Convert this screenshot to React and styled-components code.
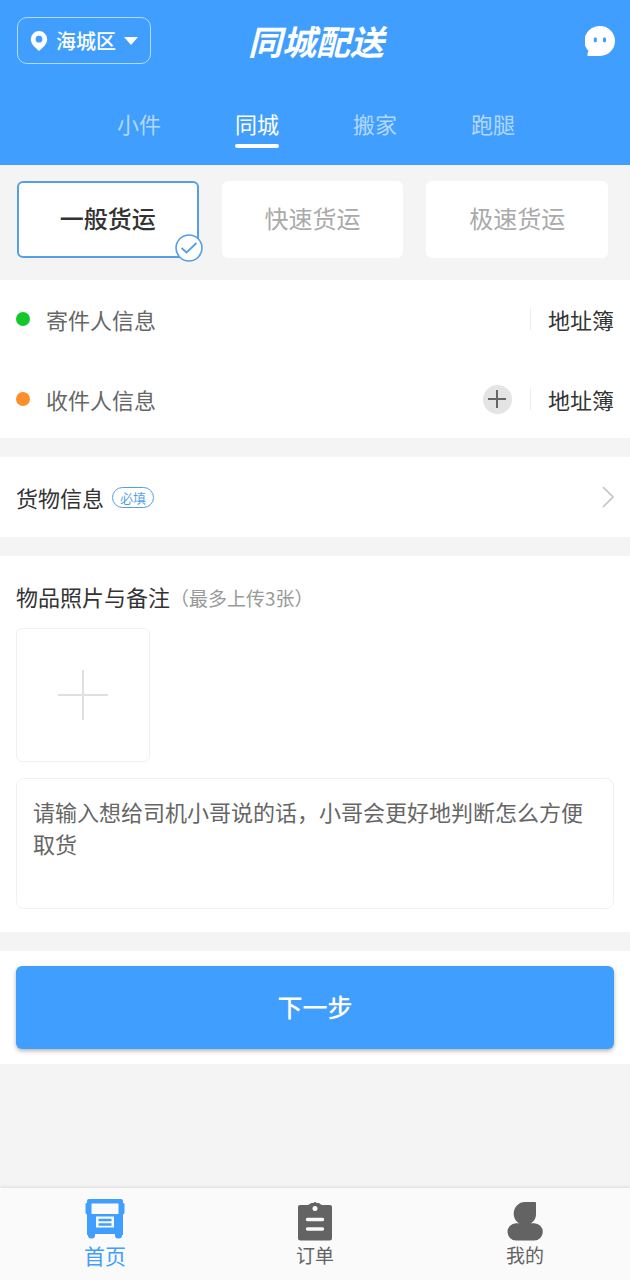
import React, { useState } from 'react';
import styled, { createGlobalStyle } from 'styled-components';

const TABS = ['小件', '同城', '搬家', '跑腿'];
const SERVICES = ['一般货运', '快速货运', '极速货运'];

const PinIcon = () => (
  <svg width="18" height="20" viewBox="0 0 18 20" aria-hidden="true">
    <path
      fill="#fff"
      fillRule="evenodd"
      d="M9 0a8.200 8.200 0 0 1 8.200 8.200c0 3.200-1.800 5.600-3.900 7.900L9 20l-4.300-3.900C2.600 13.800.8 11.400.8 8.200A8.200 8.200 0 0 1 9 0zm0 4.800a3.400 3.400 0 1 0 0 6.800 3.400 3.400 0 0 0 0-6.800z"
    />
  </svg>
);

const ChatIcon = () => (
  <svg width="30" height="30" viewBox="0 0 30 30" aria-hidden="true">
    <path fill="#fff" d="M15 0a15 15 0 0 1 0 30H2.500v-2.500c0-.8.900-1.400 1-2.200A15 15 0 0 1 15 0z" />
    <rect x="8.800" y="11.500" width="3" height="4.800" rx="1" fill="#409eff" />
    <rect x="18" y="11.500" width="3" height="4.800" rx="1" fill="#409eff" />
  </svg>
);

const CheckIcon = () => (
  <svg width="28" height="28" viewBox="0 0 28 28" aria-hidden="true">
    <circle cx="14" cy="14" r="13" fill="#fff" stroke="#559fe6" strokeWidth="1.600" />
    <path d="M6.500 14l5 4.500L21.500 9" fill="none" stroke="#559fe6" strokeWidth="1.800" />
  </svg>
);

const PlusIcon = ({ size, color, weight }) => (
  <svg width={size} height={size} viewBox={`0 0 ${size} ${size}`} aria-hidden="true">
    <path d={`M${size / 2} 0V${size}M0 ${size / 2}H${size}`} stroke={color} strokeWidth={weight} />
  </svg>
);

const ArrowIcon = () => (
  <svg width="12" height="22" viewBox="0 0 12 22" aria-hidden="true">
    <path d="M1 1l10 10L1 21" fill="none" stroke="#c4c4c4" strokeWidth="1.600" />
  </svg>
);

const TruckIcon = () => (
  <svg width="40" height="44" viewBox="0 0 40 44" aria-hidden="true">
    <path
      fill="#409eff"
      fillRule="evenodd"
      d="M4 1h32a2 2 0 0 1 2 2v2h.5a1 1 0 0 1 1 1v8.500a2 2 0 0 1-1.500 2V37h-1v1a3 3 0 0 1-3 2.500h-1a3 3 0 0 1-3-2.500v-2H10v2a3 3 0 0 1-3 2.500H6A3 3 0 0 1 3 38v-1H2V16.500a2 2 0 0 1-1.500-2V6a1 1 0 0 1 1-1H2V3a2 2 0 0 1 2-2zm2.500 4.500v10.500h27V5.500zm4.500 13v11h18v-11z"
    />
    <path d="M13.500 22h13M13.500 26.500h13" stroke="#409eff" strokeWidth="2.400" />
  </svg>
);

const OrderIcon = () => (
  <svg width="36" height="44" viewBox="0 0 36 44" aria-hidden="true">
    <path
      fill="#636363"
      d="M3 7h7.500c2 0 2.500-2 4.500-2h1.500a1.700 1.700 0 0 1 3 0H21c2 0 2.500 2 4.500 2H33a2 2 0 0 1 2 2v31a2.500 2.500 0 0 1-2.500 2.500h-29A2.500 2.500 0 0 1 1 40V9a2 2 0 0 1 2-2z"
    />
    <circle cx="18" cy="10.500" r="2.500" fill="#fafafa" />
    <path d="M10.500 21.500h15M10.500 31h15" stroke="#fafafa" strokeWidth="3.400" strokeLinecap="round" />
  </svg>
);

const UserIcon = () => (
  <svg width="36" height="44" viewBox="0 0 36 44" aria-hidden="true">
    <path fill="#636363" d="M18 4h10a1 1 0 0 1 1 1v11c0 4.500-2.200 7.800-5.500 9.300h3.700a8.600 8.600 0 0 1 0 17.200H9.100a8.600 8.600 0 0 1 0-17.200h3.400C9 23.800 6.700 20 6.700 15.500A11.400 11.400 0 0 1 18 4z" />
  </svg>
);

const NAV = [
  { label: '首页', href: '#home', Icon: TruckIcon },
  { label: '订单', href: '#orders', Icon: OrderIcon },
  { label: '我的', href: '#mine', Icon: UserIcon },
];

const App = () => {
  const [tab, setTab] = useState('同城');
  const [service, setService] = useState('一般货运');
  const [remark, setRemark] = useState('');

  return (
    <Page>
      <GlobalStyle />
      <Header>
        <TopBar>
          <CityButton type="button">
            <PinIcon />
            海城区
            <Caret />
          </CityButton>
          <Logo>同城配送</Logo>
          <ChatButton type="button" aria-label="客服">
            <ChatIcon />
          </ChatButton>
        </TopBar>
        <Tabs>
          {TABS.map((name) => (
            <Tab key={name} type="button" $active={name === tab} onClick={() => setTab(name)}>
              {name}
            </Tab>
          ))}
        </Tabs>
      </Header>

      <Services>
        {SERVICES.map((name) => (
          <Service key={name} $active={name === service}>
            <ServiceRadio name="service" checked={name === service} onChange={() => setService(name)} />
            {name}
            {name === service && (
              <CheckBadge>
                <CheckIcon />
              </CheckBadge>
            )}
          </Service>
        ))}
      </Services>

      <Sections>
        <AddressPanel>
          <AddressRow>
            <Dot $color="#14c72c" />
            <AddressButton type="button">寄件人信息</AddressButton>
            <BookLink href="#book">地址簿</BookLink>
          </AddressRow>
          <AddressRow>
            <Dot $color="#fb8f29" />
            <AddressButton type="button">收件人信息</AddressButton>
            <AddButton type="button" aria-label="添加收件人">
              <PlusIcon size={18} color="#666" weight={2} />
            </AddButton>
            <BookLink href="#book">地址簿</BookLink>
          </AddressRow>
        </AddressPanel>

        <GoodsButton type="button">
          货物信息
          <Required>必填</Required>
          <ArrowIcon />
        </GoodsButton>

        <PhotoPanel>
          <PanelTitle>
            物品照片与备注<Hint>（最多上传3张）</Hint>
          </PanelTitle>
          <UploadButton type="button" aria-label="上传照片">
            <PlusIcon size={50} color="#e0e0e0" weight={2} />
          </UploadButton>
          <Remark
            aria-label="备注"
            placeholder="请输入想给司机小哥说的话，小哥会更好地判断怎么方便取货"
            value={remark}
            onChange={(e) => setRemark(e.target.value)}
          />
        </PhotoPanel>

        <SubmitPanel>
          <SubmitButton type="button">下一步</SubmitButton>
        </SubmitPanel>
      </Sections>

      <BottomNav>
        {NAV.map(({ label, href, Icon }, i) => (
          <NavLink key={label} href={href} $active={i === 0}>
            <Icon />
            {label}
          </NavLink>
        ))}
      </BottomNav>
    </Page>
  );
};

export default App;

const GlobalStyle = createGlobalStyle`
  * {
    box-sizing: border-box;
  }

  body {
    margin: 0;
    background: #f4f4f4;
    font-family: 'Noto Sans CJK SC', Roboto, sans-serif;
    font-size: 22px;
    line-height: 32px;
    color: #333;
  }

  button, input, textarea {
    margin: 0;
    padding: 0;
    border: none;
    background: none;
    font: inherit;
    color: inherit;
  }

  button {
    cursor: pointer;
  }

  svg {
    display: block;
    flex-shrink: 0;
  }
`;

const Page = styled.div`
  display: flex;
  flex-direction: column;
  min-height: 100vh;
`;

const Header = styled.header`
  padding: 17px 15px 17px 17px;
  background: #409eff;
  color: #fff;
`;

const TopBar = styled.div`
  display: grid;
  grid-template-columns: 1fr auto 1fr;
  align-items: center;
`;

const CityButton = styled.button`
  display: flex;
  align-items: center;
  justify-self: start;
  gap: 8px;
  height: 47px;
  padding: 0 12px;
  border: 1px solid #b5d9ff;
  border-radius: 10px;
  font-size: 20px;
  font-weight: 500;
`;

const Caret = styled.span`
  border: 7px solid transparent;
  border-top: 8px solid #fff;
  border-bottom: none;
`;

const Logo = styled.h1`
  margin: 0;
  font-size: 34px;
  font-style: italic;
  font-weight: 700;
  line-height: 47px;
`;

const ChatButton = styled.button`
  justify-self: end;
`;

const Tabs = styled.nav`
  display: flex;
  justify-content: center;
  gap: 74px;
  margin-top: 43px;
`;

const Tab = styled.button`
  color: ${({ $active }) => ($active ? '#fff' : '#b3d8ff')};

  &::after {
    content: '';
    display: block;
    height: 4px;
    margin-top: 5px;
    border-radius: 2px;
    background: ${({ $active }) => ($active ? '#fff' : 'transparent')};
  }
`;

const Services = styled.div`
  display: grid;
  grid-template-columns: repeat(3, 1fr);
  gap: 23px;
  padding: 16px 22px 22px 17px;
`;

const Service = styled.label`
  position: relative;
  display: flex;
  align-items: center;
  justify-content: center;
  height: 77px;
  padding-bottom: 4px;
  border: 2px solid ${({ $active }) => ($active ? '#559fe6' : '#fff')};
  border-radius: 6px;
  background: #fff;
  color: ${({ $active }) => ($active ? '#333' : '#aaa')};
  font-size: 24px;
  font-weight: ${({ $active }) => ($active ? 500 : 400)};
  cursor: pointer;
`;

const ServiceRadio = styled.input.attrs({ type: 'radio' })`
  position: absolute;
  opacity: 0;
`;

const CheckBadge = styled.span`
  position: absolute;
  right: -6px;
  bottom: -6px;
`;

const Sections = styled.main`
  display: flex;
  flex-direction: column;
  gap: 19px;
`;

const AddressPanel = styled.section`
  display: grid;
  gap: 2px;
  background: #fff;
`;

const AddressRow = styled.div`
  display: flex;
  align-items: center;
  height: 78px;
  padding: 0 16px;
`;

const Dot = styled.span`
  width: 14px;
  height: 14px;
  margin-right: 16px;
  border-radius: 50%;
  background: ${({ $color }) => $color};
`;

const AddressButton = styled.button`
  flex: 1;
  color: #666;
  text-align: left;
`;

const AddButton = styled.button`
  display: grid;
  place-items: center;
  width: 29px;
  height: 29px;
  margin-right: 18px;
  border-radius: 50%;
  background: #e4e4e4;
`;

const BookLink = styled.a`
  padding-left: 17px;
  border-left: 1px solid #eee;
  color: inherit;
  line-height: 22px;
  text-decoration: none;
`;

const GoodsButton = styled.button`
  display: flex;
  align-items: center;
  height: 80px;
  padding: 0 16px;
  background: #fff;

  svg {
    margin-left: auto;
  }
`;

const Required = styled.span`
  margin-left: 8px;
  padding: 0 7px;
  border: 1px solid #559fe6;
  border-radius: 11px;
  color: #559fe6;
  font-size: 13px;
  line-height: 19px;
`;

const PhotoPanel = styled.section`
  padding: 24px 16px 23px;
  background: #fff;
`;

const PanelTitle = styled.h2`
  margin: 0 0 16px;
  font-size: 22px;
  font-weight: 400;
`;

const Hint = styled.span`
  color: #999;
  font-size: 19px;
  line-height: 22px;
`;

const UploadButton = styled.button`
  display: grid;
  place-items: center;
  width: 134px;
  height: 134px;
  margin-bottom: 16px;
  border: 1px solid #f1f1f1;
  border-radius: 6px;
`;

const Remark = styled.textarea`
  display: block;
  width: 100%;
  height: 131px;
  padding: 16px;
  border: 1px solid #f1f1f1;
  border-radius: 8px;
  resize: none;

  &::placeholder {
    color: #666;
  }
`;

const SubmitPanel = styled.div`
  padding: 15px 16px;
  background: #fff;
`;

const SubmitButton = styled.button`
  display: block;
  width: 100%;
  height: 83px;
  padding-bottom: 4px;
  border-radius: 6px;
  background: #409eff;
  box-shadow: 0 2px 4px rgba(0, 0, 0, 0.3);
  color: #fff;
  font-size: 25px;
  font-weight: 500;
`;

const BottomNav = styled.nav`
  display: grid;
  grid-template-columns: repeat(3, 1fr);
  height: 92px;
  margin-top: auto;
  background: #fafafa;
  box-shadow: 0 -1px 3px rgba(0, 0, 0, 0.1);
`;

const NavLink = styled.a`
  display: flex;
  flex-direction: column;
  align-items: center;
  padding-top: 10px;
  color: ${({ $active }) => ($active ? '#409eff' : '#636363')};
  font-size: ${({ $active }) => ($active ? '21px' : '19px')};
  line-height: 26px;
  text-decoration: none;
`;
